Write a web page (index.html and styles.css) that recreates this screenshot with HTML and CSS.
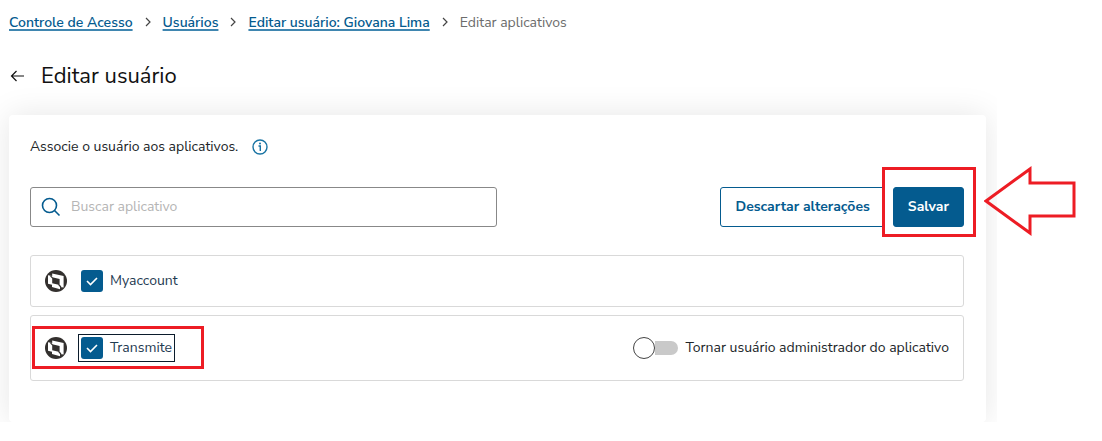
FILE: index.html
```html
<!DOCTYPE html>
<html lang="pt-BR">
<head>
    <meta charset="UTF-8">
    <meta name="viewport" content="width=device-width, initial-scale=1.0">
    <title>Editar usuário</title>
    <link rel="stylesheet" href="styles.css">
</head>
<body>
    <div class="page">
        <main class="app">
            <nav class="breadcrumb" aria-label="Navegação">
                <a href="#">Controle de Acesso</a>
                <svg class="chevron" viewBox="0 0 6 12"><path d="M1 1l4 4-4 4"/></svg>
                <a href="#">Usuários</a>
                <svg class="chevron" viewBox="0 0 6 12"><path d="M1 1l4 4-4 4"/></svg>
                <a href="#">Editar usuário: Giovana Lima</a>
                <svg class="chevron" viewBox="0 0 6 12"><path d="M1 1l4 4-4 4"/></svg>
                <span>Editar aplicativos</span>
            </nav>

            <header class="title">
                <button class="back" type="button" aria-label="Voltar">
                    <svg viewBox="0 0 14 12"><path d="M14 6H1.5M6.5 1l-5 5 5 5"/></svg>
                </button>
                <h1>Editar usuário</h1>
            </header>

            <section class="panel">
                <p class="intro">
                    Associe o usuário aos aplicativos.
                    <svg class="info" viewBox="0 0 16 16"><circle cx="8" cy="8" r="7"/><path d="M6.5 7h1.8v5"/><circle class="dot" cx="8" cy="4.5" r="1"/></svg>
                </p>

                <div class="toolbar">
                    <div class="search">
                        <svg viewBox="0 0 20 20"><circle cx="8.5" cy="8.5" r="7"/><path d="M13.5 13.5l5 5"/></svg>
                        <input type="text" placeholder="Buscar aplicativo" aria-label="Buscar aplicativo">
                    </div>
                    <div class="actions">
                        <button class="btn" type="button">Descartar alterações</button>
                        <div class="save">
                            <button class="btn btn-primary" type="button">Salvar</button>
                            <div class="mark mark-save"></div>
                        </div>
                    </div>
                </div>

                <ul class="apps">
                    <li class="app-row">
                        <svg class="logo" viewBox="0 0 22 22"><circle cx="11" cy="11" r="11"/><path class="shape" d="M3 5.2l4.2.8V3.6L18.6 6v11.4l-3.6-.4v2.2L7 17v-2.2l-4-1z"/><path d="M7.2 7.2l7.4 1.8v6L7.2 13.2zM5.6 5.2l2.6 2.6-1 .8-2-2.2zM14 14l2.4 2.6-1 1-2.2-2.6z"/></svg>
                        <label class="check">
                            <input type="checkbox" checked>
                            <span>Myaccount</span>
                        </label>
                    </li>
                    <li class="app-row app-row-tall">
                        <svg class="logo" viewBox="0 0 22 22"><circle cx="11" cy="11" r="11"/><path class="shape" d="M3 5.2l4.2.8V3.6L18.6 6v11.4l-3.6-.4v2.2L7 17v-2.2l-4-1z"/><path d="M7.2 7.2l7.4 1.8v6L7.2 13.2zM5.6 5.2l2.6 2.6-1 .8-2-2.2zM14 14l2.4 2.6-1 1-2.2-2.6z"/></svg>
                        <label class="check check-focus">
                            <input type="checkbox" checked>
                            <span>Transmite</span>
                        </label>
                        <label class="toggle">
                            <input type="checkbox" role="switch">
                            <span>Tornar usuário administrador do aplicativo</span>
                        </label>
                        <div class="mark mark-app"></div>
                    </li>
                </ul>
            </section>
        </main>
        <svg class="arrow" viewBox="0 0 92 72"><path d="M2 36L46 4v14h44v33H46v17z"/></svg>
    </div>
</body>
</html>
```
FILE: styles.css
```css
* {
    box-sizing: border-box;
}
body {
    margin: 0;
    background: #fff;
    color: #212529;
    font-family: "Nunito Sans", Lato, sans-serif;
    font-size: 14px;
    line-height: 20px;
}
svg {
    fill: none;
    flex-shrink: 0;
}
.page {
    position: relative;
    padding-right: 105px;
}
.app {
    overflow: hidden;
    padding: 13px 11px 0 9px;
}
.breadcrumb {
    display: flex;
    align-items: center;
    gap: 12px;
    color: #6c6c6c;
}
.breadcrumb a {
    color: #045b8f;
    font-weight: 600;
    text-decoration-color: #3f86b0;
    text-decoration-thickness: 2px;
    text-underline-offset: 2px;
}
.chevron {
    width: 6px;
    height: 12px;
    stroke: #444;
    stroke-width: 1.2;
}
.title {
    display: flex;
    align-items: center;
    gap: 16px;
    margin: 27px 0 23px;
}
.back {
    padding: 0 1px;
    border: none;
    background: none;
    display: flex;
    cursor: pointer;
}
.back svg {
    width: 14px;
    height: 12px;
    stroke: #111;
    stroke-width: 1.2;
}
h1 {
    margin: 0;
    color: #111;
    font-size: 22px;
    font-weight: 400;
    line-height: 32px;
}
.panel {
    padding: 22px 22px 41px 21px;
    background: #fff;
    border-radius: 4px;
    box-shadow: 0 0 32px rgba(0, 0, 0, 0.1);
}
.intro {
    display: flex;
    align-items: center;
    gap: 14px;
    margin: 0 0 30px;
}
.info {
    width: 16px;
    height: 16px;
    stroke: #1873a3;
    stroke-width: 1.4;
}
.info .dot {
    fill: #1873a3;
    stroke: none;
}
.toolbar {
    display: flex;
    justify-content: space-between;
}
.search {
    display: flex;
    align-items: center;
    gap: 10px;
    width: 50%;
    height: 40px;
    padding: 0 10px;
    border: 1px solid #888;
    border-radius: 3px;
}
.search svg {
    width: 20px;
    height: 20px;
    stroke: #045b8f;
    stroke-width: 1.6;
}
.search input {
    flex: 1;
    border: none;
    outline: none;
    padding: 0;
    background: none;
    font: inherit;
}
.search input::placeholder {
    color: #b5b5b5;
}
.actions {
    display: flex;
    gap: 8px;
}
.btn {
    height: 40px;
    padding: 0 14px;
    border: 1px solid #045b8f;
    border-radius: 3px;
    background: #fff;
    color: #045b8f;
    font: inherit;
    font-weight: 700;
    cursor: pointer;
}
.btn-primary {
    background: #045b8f;
    color: #fff;
}
.save {
    position: relative;
}
.mark {
    position: absolute;
    border: 3px solid #ed1c24;
    pointer-events: none;
}
.mark-save {
    inset: -20px -12px -10px -11px;
}
.apps {
    display: grid;
    gap: 8px;
    margin: 28px 0 0;
    padding: 0;
    list-style: none;
}
.app-row {
    position: relative;
    display: flex;
    align-items: center;
    gap: 12px;
    height: 52px;
    padding: 0 14px;
    border: 1px solid #d9d9d9;
    border-radius: 3px;
}
.app-row-tall {
    height: 66px;
}
.logo {
    width: 22px;
    height: 22px;
    fill: #33302e;
}
.logo .shape {
    fill: #fff;
}
.check {
    display: flex;
    align-items: center;
    gap: 7px;
    padding: 2px;
    color: #1f3b52;
}
.check-focus {
    outline: 1px solid #0b1c2c;
}
.check input {
    appearance: none;
    width: 22px;
    height: 22px;
    margin: 0;
    border-radius: 3px;
    background: #045b8f url("data:image/svg+xml,%3Csvg xmlns='http://www.w3.org/2000/svg' viewBox='0 0 22 22'%3E%3Cpath d='M6 11l3.5 3.5L16 8' fill='none' stroke='white' stroke-width='1.6'/%3E%3C/svg%3E");
}
.toggle {
    display: flex;
    align-items: center;
    gap: 7px;
    margin-left: auto;
}
.toggle input {
    appearance: none;
    display: flex;
    align-items: center;
    width: 45px;
    height: 22px;
    margin: 0;
}
.toggle input::before {
    content: "";
    box-sizing: border-box;
    width: 22px;
    height: 22px;
    border: 1px solid #444;
    border-radius: 50%;
    background: #fff;
}
.toggle input::after {
    content: "";
    flex: 1;
    height: 14px;
    border-radius: 0 7px 7px 0;
    background: #c9c9c9;
}
.mark-app {
    top: 10px;
    left: 1px;
    width: 172px;
    height: 43px;
}
.arrow {
    position: absolute;
    top: 165px;
    right: 26px;
    width: 92px;
    height: 72px;
    stroke: #ed1c24;
    stroke-width: 3;
}
```
